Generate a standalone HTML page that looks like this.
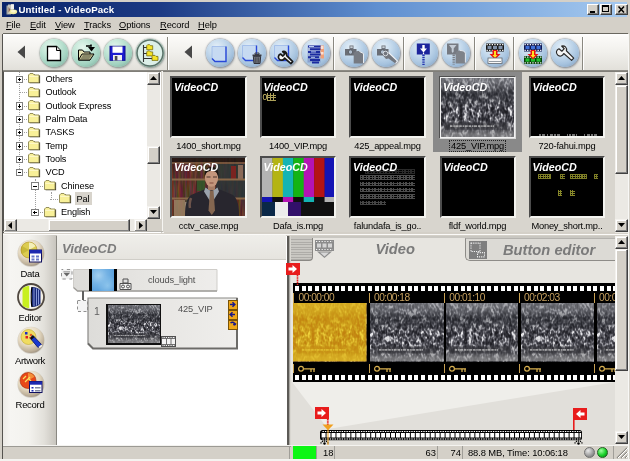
<!DOCTYPE html>
<html>
<head>
<meta charset="utf-8">
<title>Untitled - VideoPack</title>
<style>
*{box-sizing:border-box;margin:0;padding:0}
html,body{width:630px;height:461px;overflow:hidden;background:#d4d0c8}
body{font-family:"Liberation Sans",sans-serif;font-size:9.6px;color:#000;position:relative}
.a{position:absolute}
.t{position:absolute;white-space:nowrap;line-height:1}
#win{position:absolute;left:0;top:0;width:630px;height:461px;background:#d4d0c8;overflow:hidden;filter:blur(.35px)}
/* title */
#title{left:2px;top:2px;width:625px;height:14.500px;background:linear-gradient(90deg,#0a246a 0%,#1c3a84 25%,#5f8fd0 60%,#a6caf0 100%)}
.wb{position:absolute;top:4px;height:11px;width:12px;background:#d4d0c8;border:1px solid;border-color:#fff #404040 #404040 #fff;box-shadow:inset -1px -1px 0 #808080}
/* menu */
.m{position:absolute;top:19px;font-size:9.3px;letter-spacing:-.1px;line-height:12px;white-space:nowrap}
.m u{text-decoration:underline}
/* toolbar */
#tb{left:3px;top:33px;width:625px;height:38px;border-top:1px solid #6a6860;border-bottom:1px solid #8c8a84;background:linear-gradient(180deg,#ffffff 0,#fbfaf8 3px,#f1f0ec 50%,#e2e0da 100%)}
.sep{position:absolute;top:37px;height:33px;width:2px;border-left:1px solid #8a8880;border-right:1px solid #fff}
.btn{position:absolute;width:28px;height:28px;border-radius:50%;top:38px}
.g{background:radial-gradient(circle at 38% 30%,#e6f7ee 0,#c2e6d6 35%,#a2d2c0 65%,#84b2a2 88%,#70968a 100%);box-shadow:0 0 1.500px .5px rgba(110,130,122,.75),1px 1.500px 2px rgba(120,130,125,.5)}
.b{background:radial-gradient(circle at 38% 30%,#e6f0f8 0,#c4d9ec 35%,#a5c2de 65%,#87a3c2 88%,#6e88a8 100%);box-shadow:0 0 1.500px .5px rgba(100,112,130,.75),1px 1.500px 2px rgba(120,125,135,.5)}
/* sunken */
.sunk{border:1px solid;border-color:#808080 #fff #fff #808080}
/* scrollbars */
.sbtn{position:absolute;background:#d4d0c8;border:1px solid;border-color:#f4f2ee #404040 #404040 #f4f2ee;box-shadow:inset -1px -1px 0 #808080,inset 1px 1px 0 #fff}
.track{position:absolute;background:#ebe9e4}
/* tree */
.tr{position:absolute;font-size:9.2px;letter-spacing:-.12px;line-height:12px;white-space:nowrap}
.fold{position:absolute;width:13px;height:11px}
.pm{position:absolute;width:7.500px;height:7.500px;border:1px solid #808080;background:#fff;margin-left:.7px;margin-top:.3px}
.pm:before{content:"";position:absolute;left:1px;top:2.250px;width:3.500px;height:1px;background:#000}
.pm.p:after{content:"";position:absolute;left:2.250px;top:1px;width:1px;height:3.500px;background:#000}
/* thumbs */
.th{position:absolute;width:76.500px;height:62px;background:#000;border:2px solid;border-color:#4c4c4c #f4f4f0 #f4f4f0 #4c4c4c;overflow:hidden}
.vcd{position:absolute;left:2px;top:3px;font:italic bold 10.7px "Liberation Sans",sans-serif;color:#fff;line-height:12px}
.lab{position:absolute;width:90px;text-align:center;font-size:9.3px;line-height:12px;white-space:nowrap;letter-spacing:-.2px}
</style>
</head>
<body>
<svg width="0" height="0" style="position:absolute">
<defs>
<filter id="crowdN" x="0" y="0" width="100%" height="100%" color-interpolation-filters="sRGB">
<feTurbulence type="fractalNoise" baseFrequency="0.22 0.14" numOctaves="2" seed="7" result="a"/>
<feTurbulence type="fractalNoise" baseFrequency="0.55 0.34" numOctaves="1" seed="12" result="b"/>
<feComposite in="a" in2="b" operator="arithmetic" k1="0" k2=".55" k3=".45" k4="0" result="n"/>
<feColorMatrix in="n" type="matrix" values="0 3.2 0 0 -1.1  0 3.2 0 0 -1.1  0 3.2 0 0 -1.1  0 0 0 0 1"/>
<feComponentTransfer><feFuncR type="table" tableValues="0.11 0.18 0.27 0.40 0.66 0.95"/><feFuncG type="table" tableValues="0.11 0.18 0.27 0.40 0.66 0.95"/><feFuncB type="table" tableValues="0.13 0.21 0.30 0.43 0.69 0.96"/></feComponentTransfer>
</filter>
<filter id="crowdN2" x="0" y="0" width="100%" height="100%" color-interpolation-filters="sRGB">
<feTurbulence type="fractalNoise" baseFrequency="0.23 0.15" numOctaves="2" seed="31" result="a"/>
<feTurbulence type="fractalNoise" baseFrequency="0.58 0.36" numOctaves="1" seed="36" result="b"/>
<feComposite in="a" in2="b" operator="arithmetic" k1="0" k2=".55" k3=".45" k4="0" result="n"/>
<feColorMatrix in="n" type="matrix" values="0 3.2 0 0 -1.1  0 3.2 0 0 -1.1  0 3.2 0 0 -1.1  0 0 0 0 1"/>
<feComponentTransfer><feFuncR type="table" tableValues="0.11 0.18 0.27 0.40 0.66 0.95"/><feFuncG type="table" tableValues="0.11 0.18 0.27 0.40 0.66 0.95"/><feFuncB type="table" tableValues="0.13 0.21 0.30 0.43 0.69 0.96"/></feComponentTransfer>
</filter>
<filter id="books" x="0" y="0" width="100%" height="100%" color-interpolation-filters="sRGB">
<feTurbulence type="fractalNoise" baseFrequency="0.45 0.04" numOctaves="2" seed="3"/>
<feColorMatrix type="matrix" values="1.6 0 0 0 -0.25  0 1.1 0 0 -0.25  0 0 0.9 0 -0.2  0 0 0 0 1"/>
</filter>
<linearGradient id="crowdG" x1="0" y1="0" x2="0" y2="1">
<stop offset="0" stop-color="#84868c" stop-opacity=".68"/><stop offset=".14" stop-color="#74767c" stop-opacity=".55"/><stop offset=".25" stop-color="#303238" stop-opacity=".55"/><stop offset=".4" stop-color="#34363c" stop-opacity=".36"/><stop offset=".52" stop-color="#404046" stop-opacity=".05"/><stop offset=".7" stop-color="#3a3a40" stop-opacity=".15"/><stop offset=".84" stop-color="#606064" stop-opacity=".45"/><stop offset=".93" stop-color="#8c8c8e" stop-opacity=".7"/><stop offset="1" stop-color="#909092" stop-opacity=".75"/>
</linearGradient>
<symbol id="crowd" viewBox="0 0 74 58" preserveAspectRatio="none">
<rect width="74" height="58" fill="#606068"/>
<rect width="74" height="58" filter="url(#crowdN)"/>
<rect width="74" height="58" fill="url(#crowdG)"/>
<rect x="4" y="43" width="62" height="7" fill="#303034" opacity=".55"/>
<path d="M9 46.500h44" stroke="#c8c8c8" stroke-width="1.600" stroke-dasharray="2.500 .8 1.500 .6 3 .9" opacity=".7"/>
</symbol>
<symbol id="crowd2" viewBox="0 0 74 58" preserveAspectRatio="none">
<rect width="74" height="58" fill="#606068"/>
<rect width="74" height="58" filter="url(#crowdN2)"/>
<rect width="74" height="58" fill="url(#crowdG)"/>
<rect x="4" y="43" width="62" height="7" fill="#303034" opacity=".55"/>
<path d="M9 46.500h44" stroke="#c8c8c8" stroke-width="1.600" stroke-dasharray="2.500 .8 1.500 .6 3 .9" opacity=".7"/>
</symbol>
</defs></svg>
<div id="win">
<!-- outer frame -->
<div class="a" style="left:2px;top:34px;width:1.200px;height:425px;background:#55534f"></div>
<div class="a" style="left:0;top:459px;width:630px;height:2px;background:#f4f3f0"></div>
<div class="a" style="left:628px;top:34px;width:1px;height:425px;background:#f8f8f6"></div>

<!-- TITLE BAR -->
<div id="title" class="a"></div>
<svg class="a" style="left:5px;top:3px" width="14" height="14" viewBox="0 0 14 14"><path d="M1.500 2.500h4.500v9h-4.500z" fill="#a8a8a0"/><path d="M3 1.500h5.500v9.500h-5.500z" fill="#c4c4bc"/><path d="M6 1.200h3v5h-3z" fill="#f0f0ec"/><path d="M3.500 4l2.500 3.500l-2.500 2z" fill="#8c6458"/><ellipse cx="8.300" cy="8.800" rx="3.900" ry="2.400" fill="#f0eca0"/><ellipse cx="8.300" cy="8.300" rx="2.400" ry="1.200" fill="#fbf8d0"/></svg>
<div class="t" id="ttxt" style="left:18.400px;top:4.600px;font-weight:bold;font-size:9.700px;color:#fff;letter-spacing:.12px">Untitled - VideoPack</div>
<div class="wb" style="left:587px"><div class="a" style="left:2px;top:6px;width:5px;height:2px;background:#000"></div></div>
<div class="wb" style="left:600px"><div class="a" style="left:1px;top:0px;width:7px;height:7px;border:1px solid #000;border-top-width:2px"></div></div>
<div class="wb" style="left:615px;width:13px"><svg class="a" style="left:1px;top:0" width="9" height="9" viewBox="0 0 9 9"><path d="M1.5 1.5L7 7.5M7 1.5L1.5 7.5" stroke="#000" stroke-width="1.5"/></svg></div>

<!-- MENU -->
<div class="m" style="left:6px"><u>F</u>ile</div>
<div class="m" style="left:30px"><u>E</u>dit</div>
<div class="m" style="left:55px"><u>V</u>iew</div>
<div class="m" style="left:84px"><u>T</u>racks</div>
<div class="m" style="left:119px"><u>O</u>ptions</div>
<div class="m" style="left:160px"><u>R</u>ecord</div>
<div class="m" style="left:198px"><u>H</u>elp</div>

<!-- TOOLBAR -->
<div id="tb" class="a"></div>
<div class="sep" style="left:167px"></div>
<div class="sep" style="left:333px"></div>
<div class="sep" style="left:403px"></div>
<div class="sep" style="left:474px"></div>
<div class="sep" style="left:513px"></div>
<div class="sep" style="left:582px"></div>
<svg class="a" style="left:17px;top:45px" width="9" height="14"><path d="M8 0.5L0.5 7L8 13.5Z" fill="#484848"/></svg>
<svg class="a" style="left:184px;top:45px" width="9" height="14"><path d="M8 0.5L0.5 7L8 13.5Z" fill="#484848"/></svg>
<div id="tbicons">
<div class="btn g" style="left:40px;top:39px"><svg width="28" height="28" viewBox="0 0 28 28" style="position:absolute;left:0;top:0"><path d="M7.5 7.5h9l4 4v10h-13z" fill="#fff" stroke="#000" stroke-width="1.3"/><path d="M16.5 7.5v4h4" fill="#ddd" stroke="#000" stroke-width="1"/></svg></div>
<div class="btn g" style="left:72px;top:39px"><svg width="28" height="28" viewBox="0 0 28 28" style="position:absolute;left:0;top:0"><path d="M14 7h5v-1.5" fill="none" stroke="#000" stroke-width="1.6"/><path d="M16 8l3.5 4.5l3.5-4.5z" fill="#000"/><path d="M6.5 11h4l1.5 2h6v8h-11.5z" fill="#e8e4b4" stroke="#000" stroke-width="1"/><path d="M6.5 21l3.5-6h12l-4 6z" fill="#d8d4a0" stroke="#000" stroke-width="1"/><path d="M8 20.5l3-4.5h9l-3 4.5z" fill="#6a6850" opacity=".7"/></svg></div>
<div class="btn g" style="left:104px;top:39px"><svg width="28" height="28" viewBox="0 0 28 28" style="position:absolute;left:0;top:0"><rect x="6" y="7.300" width="15" height="14" fill="#1c1cd0" stroke="#0c0c8c" stroke-width="1"/><rect x="8.500" y="7.500" width="10" height="6.300" fill="#fff"/><rect x="9" y="16" width="9" height="5.500" fill="#f0f0f0"/><rect x="10.800" y="17" width="2.600" height="4.500" fill="#484850"/></svg></div>
<div class="btn g" style="left:136px;top:39px"><svg width="28" height="28" viewBox="0 0 28 28" style="position:absolute;left:0;top:0"><circle cx="14" cy="14" r="13" fill="#dcefe8" stroke="#5a7068" stroke-width="1.500"/><path d="M7.500 6v17M7.500 8.500h4M7.500 14.500h4M7.500 19.500h9" stroke="#303030" stroke-width="1.100" fill="none"/><path d="M10.7 6.7l1-1h2l1 1h2v4h-6z" fill="#f4e428" stroke="#6c6000" stroke-width=".7"/><path d="M10.7 12.9l1-1h2l1 1h2v4h-6z" fill="#f4e428" stroke="#6c6000" stroke-width=".7"/><path d="M16 17.4l1-1h2l1 1h2v4h-6z" fill="#f4e428" stroke="#6c6000" stroke-width=".7"/></svg></div>
<div class="btn b" style="margin-top:.5px;left:206px;top:38px"><svg width="28" height="28" viewBox="0 0 28 28" style="position:absolute;left:0;top:0"><path d="M6 7.5h14v15h-11l-3-3z" fill="#c6daf2"/><path d="M6 7.5h14v15h-11l-3-3z" fill="none" stroke="#9ab8e8" stroke-width=".8"/><path d="M20 7.5v15h-11l-3-3" fill="none" stroke="#2848d8" stroke-width="1.400"/></svg></div>
<div class="btn b" style="margin-top:.5px;left:238px;top:38px"><svg width="28" height="28" viewBox="0 0 28 28" style="position:absolute;left:0;top:0"><path d="M4.5 6.5h14v15h-11l-3-3z" fill="#c6daf2"/><path d="M4.5 6.5h14v15h-11l-3-3z" fill="none" stroke="#9ab8e8" stroke-width=".8"/><path d="M18.5 6.5v15h-11l-3-3" fill="none" stroke="#2848d8" stroke-width="1.400"/><path d="M14.500 15.500h9v1.600h-9z" fill="#3c3c44"/><path d="M17 14h4v1.500h-4z" fill="none" stroke="#3c3c44" stroke-width="1"/><path d="M15.300 17.300h7.400l-.7 7.200h-6z" fill="#787c84" stroke="#303038" stroke-width="1"/><path d="M17.300 18.300v5.500M19 18.300v5.500M20.700 18.300v5.500" stroke="#303038" stroke-width=".7"/></svg></div>
<div class="btn b" style="margin-top:.5px;left:270px;top:38px"><svg width="28" height="28" viewBox="0 0 28 28" style="position:absolute;left:0;top:0"><path d="M4.5 6.5h14v15h-11l-3-3z" fill="#c6daf2"/><path d="M4.5 6.5h14v15h-11l-3-3z" fill="none" stroke="#9ab8e8" stroke-width=".8"/><path d="M18.5 6.5v15h-11l-3-3" fill="none" stroke="#2848d8" stroke-width="1.400"/><path d="M10.5 15a3.200 3.200 0 1 0 4.100 4.100l6.300 5.500l1.800-2l-6-6a3.200 3.200 0 0 0-4-4l2.200 2.300l-2 2.100z" fill="#f6f6f6" stroke="#181818" stroke-width="1.700" stroke-linejoin="round"/></svg></div>
<div class="btn b" style="margin-top:.5px;left:301.5px;top:38px"><svg width="28" height="28" viewBox="0 0 28 28" style="position:absolute;left:0;top:0"><rect x="5.500" y="6.500" width="13" height="17" fill="#1c2890" opacity=".25"/><path d="M6 7.500h13M8 10.200h11M6 12.900h12M8 15.600h11M6 18.300h11M8 21h10M10 23.500h7" stroke="#1a2aa0" stroke-width="2"/><path d="M7 7.500h5M9 12.900h5M9 18.300h4" stroke="#b8ccf4" stroke-width="1"/><rect x="18.500" y="6.500" width="3.500" height="13" fill="#f0a078"/><rect x="19" y="7" width="2.500" height="3" fill="#fbe0d4"/><rect x="19" y="13" width="2.500" height="2.500" fill="#fbe0d4"/></svg></div>
<div class="btn b" style="margin-top:.5px;left:339.5px;top:38px"><svg width="28" height="28" viewBox="0 0 28 28" style="position:absolute;left:0;top:0"><path d="M5 10h4.500v-3.500h4v3.500h3v6.500h-11.500z" fill="#6a6e76"/><circle cx="10.500" cy="13" r="2.200" fill="#aebccc" stroke="#50545c" stroke-width=".8"/><rect x="10.300" y="7.300" width="2.400" height="1.800" fill="#c8d0d8"/><path d="M13.700 14c1-1.500 4-2.500 6-1.500l4 2v10h-10z" fill="#767a82"/><path d="M19.500 12.500l4 2v9.500" fill="none" stroke="#e8ecf0" stroke-width="1"/></svg></div>
<div class="btn b" style="margin-top:.5px;left:371.5px;top:38px"><svg width="28" height="28" viewBox="0 0 28 28" style="position:absolute;left:0;top:0"><path d="M5 10h4.500v-3.500h4v3.500h3v6.500h-11.500z" fill="#6a6e76"/><circle cx="10.500" cy="13" r="2.200" fill="#aebccc" stroke="#50545c" stroke-width=".8"/><rect x="10.300" y="7.300" width="2.400" height="1.800" fill="#c8d0d8"/><path d="M12 12.500c2-1 4 0 5 1.500l8.500 8l-2 2.500l-7-5l-2.500.5l-3-3.500z" fill="#72767e"/><path d="M16.500 13.500l9 8.500l-2 2.500" fill="none" stroke="#eef0f4" stroke-width="1.100"/><circle cx="13.500" cy="14.500" r="2.300" fill="none" stroke="#dfe4ea" stroke-width=".9"/></svg></div>
<div class="btn b" style="margin-top:.5px;left:409.5px;top:38px"><svg width="28" height="28" viewBox="0 0 28 28" style="position:absolute;left:0;top:0"><rect x="6.800" y="4.500" width="13" height="11" fill="#1c249c"/><path d="M12.300 6h2.400v3.500h2.300l-3.500 4l-3.500-4h2.300z" fill="#fff"/><path d="M13.500 13.500v2" stroke="#fff" stroke-width="1.200"/><path d="M13.500 15.500v10.500" stroke="#2434b0" stroke-width="2.400" stroke-dasharray="1.400 .9"/></svg></div>
<div class="btn b" style="margin-top:.5px;left:441.5px;top:38px"><svg width="28" height="28" viewBox="0 0 28 28" style="position:absolute;left:0;top:0"><rect x="5" y="4.500" width="11.500" height="11" fill="#767a82"/><path d="M7 6h7.500l-2.800 3.500v3l-1 1.500l-1-1.500v-3z" fill="#c4ccd6"/><path d="M11.700 15.500v10" stroke="#7a7e86" stroke-width="2.400" stroke-dasharray="1.400 .9"/><path d="M13.600 14.500c0-2 2-3 4.500-3s5.300 1 5.300 3v10h-9.800z" fill="#7e8289"/><path d="M18 11.500c3 0 5.400 1 5.400 3v9" fill="none" stroke="#e4e8ee" stroke-width="1"/></svg></div>
<div class="btn b" style="margin-top:.5px;left:480.5px;top:38px"><svg width="28" height="28" viewBox="0 0 28 28" style="position:absolute;left:0;top:0"><rect x="5" y="4.5" width="18" height="8" fill="#181818"/><path d="M5.500 5.7h17M5.500 11.3h17" stroke="#fff" stroke-width="1.200" stroke-dasharray="1.300 1.300"/><rect x="6.500" y="6.9" width="4" height="3.200" fill="#8090a8"/><rect x="12" y="6.9" width="4" height="3.200" fill="#8090a8"/><rect x="17.500" y="6.9" width="4" height="3.200" fill="#8090a8"/><path d="M11.500 11h5v4h3l-5.500 5.500l-5.500-5.500h3z" fill="#e81010"/><path d="M13 12h2v4h1.500l-2.500 3l-2.500-3h1.500z" fill="#ffe020"/><rect x="7" y="19" width="14" height="5.500" fill="#f8f8f8" stroke="#606870" stroke-width=".8"/><path d="M8 22.500h12" stroke="#9098a0" stroke-width="1"/></svg></div>
<div class="btn b" style="margin-top:.5px;left:519px;top:38px"><svg width="28" height="28" viewBox="0 0 28 28" style="position:absolute;left:0;top:0"><rect x="5" y="4.5" width="18" height="8" fill="#101850"/><path d="M5.500 5.7h17M5.500 11.3h17" stroke="#fff" stroke-width="1.200" stroke-dasharray="1.300 1.300"/><rect x="6.500" y="6.9" width="4" height="3.200" fill="#4070d8"/><rect x="12" y="6.9" width="4" height="3.200" fill="#4070d8"/><rect x="17.500" y="6.9" width="4" height="3.200" fill="#4070d8"/><rect x="5" y="17" width="18" height="8" fill="#084008"/><path d="M5.500 18.2h17M5.500 23.8h17" stroke="#fff" stroke-width="1.200" stroke-dasharray="1.300 1.300"/><rect x="6.500" y="19.4" width="4" height="3.200" fill="#20c030"/><rect x="12" y="19.4" width="4" height="3.200" fill="#20c030"/><rect x="17.500" y="19.4" width="4" height="3.200" fill="#20c030"/><path d="M11.500 11h5v4h3l-5.500 5.500l-5.500-5.500h3z" fill="#e81010"/><path d="M13 12h2v4h1.500l-2.500 3l-2.500-3h1.500z" fill="#ffe020"/></svg></div>
<div class="btn b" style="margin-top:.5px;left:551px;top:38px"><svg width="28" height="28" viewBox="0 0 28 28" style="position:absolute;left:0;top:0"><g transform="translate(-1,.8) scale(1.05)"><path d="M8.5 8.5a3.6 3.6 0 1 0 4.600 4.600l7.500 6.500l2-2.200l-7-7a3.600 3.600 0 0 0-4.500-4.500l2.500 2.600l-2.300 2.400z" fill="#f4f4f4" stroke="#282828" stroke-width="1.1" stroke-linejoin="round"/></g></svg></div>
</div>

<!-- TREE PANEL -->
<div id="tree">
<div class="a" style="left:3px;top:71px;width:158px;height:162px;background:#fff;border-top:1px solid #807e78;border-left:1px solid #55534e"></div>
<div class="a" style="left:19px;top:72px;width:0;height:101px;border-left:1px dotted #a0a0a0"></div>
<div class="a" style="left:35px;top:179px;width:0;height:34px;border-left:1px dotted #a0a0a0"></div>
<div class="a" style="left:51px;top:192px;width:0;height:8px;border-left:1px dotted #a0a0a0"></div>
<div class="a" style="left:19px;top:78.9px;width:8px;height:0;border-top:1px dotted #a0a0a0"></div>
<div class="pm p" style="left:15px;top:75.4px"></div>
<svg class="fold" style="left:28px;top:73.4px" viewBox="0 0 13 11"><path d="M1.600 2.600l1.500-1.500h3l1.500 1.500h4.500v7.700h-10.500z" fill="#3c3a28"/><path d="M.5 2l1.500-1.500h3l1.500 1.500h4.500v7.500h-10.500z" fill="#f8f098" stroke="#8c8650" stroke-width=".9"/><path d="M1.300 3.300h9" stroke="#fffce0" stroke-width=".8"/></svg>
<div class="tr" style="left:45.5px;top:72.9px">Others</div>
<div class="a" style="left:19px;top:92.2px;width:8px;height:0;border-top:1px dotted #a0a0a0"></div>
<svg class="fold" style="left:28px;top:86.7px" viewBox="0 0 13 11"><path d="M1.600 2.600l1.500-1.500h3l1.500 1.500h4.500v7.700h-10.500z" fill="#3c3a28"/><path d="M.5 2l1.500-1.500h3l1.500 1.500h4.500v7.500h-10.500z" fill="#f8f098" stroke="#8c8650" stroke-width=".9"/><path d="M1.300 3.300h9" stroke="#fffce0" stroke-width=".8"/></svg>
<div class="tr" style="left:45.5px;top:86.2px">Outlook</div>
<div class="a" style="left:19px;top:105.6px;width:8px;height:0;border-top:1px dotted #a0a0a0"></div>
<div class="pm p" style="left:15px;top:102.1px"></div>
<svg class="fold" style="left:28px;top:100.1px" viewBox="0 0 13 11"><path d="M1.600 2.600l1.500-1.500h3l1.500 1.500h4.500v7.700h-10.500z" fill="#3c3a28"/><path d="M.5 2l1.500-1.500h3l1.500 1.500h4.500v7.500h-10.500z" fill="#f8f098" stroke="#8c8650" stroke-width=".9"/><path d="M1.300 3.300h9" stroke="#fffce0" stroke-width=".8"/></svg>
<div class="tr" style="left:45.5px;top:99.6px">Outlook Express</div>
<div class="a" style="left:19px;top:118.9px;width:8px;height:0;border-top:1px dotted #a0a0a0"></div>
<div class="pm p" style="left:15px;top:115.4px"></div>
<svg class="fold" style="left:28px;top:113.4px" viewBox="0 0 13 11"><path d="M1.600 2.600l1.500-1.500h3l1.500 1.500h4.500v7.700h-10.500z" fill="#3c3a28"/><path d="M.5 2l1.500-1.500h3l1.500 1.500h4.500v7.500h-10.500z" fill="#f8f098" stroke="#8c8650" stroke-width=".9"/><path d="M1.300 3.300h9" stroke="#fffce0" stroke-width=".8"/></svg>
<div class="tr" style="left:45.5px;top:112.9px">Palm Data</div>
<div class="a" style="left:19px;top:132.2px;width:8px;height:0;border-top:1px dotted #a0a0a0"></div>
<div class="pm p" style="left:15px;top:128.7px"></div>
<svg class="fold" style="left:28px;top:126.7px" viewBox="0 0 13 11"><path d="M1.600 2.600l1.500-1.500h3l1.500 1.500h4.500v7.700h-10.500z" fill="#3c3a28"/><path d="M.5 2l1.500-1.500h3l1.500 1.500h4.500v7.500h-10.500z" fill="#f8f098" stroke="#8c8650" stroke-width=".9"/><path d="M1.300 3.300h9" stroke="#fffce0" stroke-width=".8"/></svg>
<div class="tr" style="left:45.5px;top:126.2px">TASKS</div>
<div class="a" style="left:19px;top:145.6px;width:8px;height:0;border-top:1px dotted #a0a0a0"></div>
<div class="pm p" style="left:15px;top:142.1px"></div>
<svg class="fold" style="left:28px;top:140.1px" viewBox="0 0 13 11"><path d="M1.600 2.600l1.500-1.500h3l1.500 1.500h4.500v7.700h-10.500z" fill="#3c3a28"/><path d="M.5 2l1.500-1.500h3l1.500 1.500h4.500v7.500h-10.500z" fill="#f8f098" stroke="#8c8650" stroke-width=".9"/><path d="M1.300 3.300h9" stroke="#fffce0" stroke-width=".8"/></svg>
<div class="tr" style="left:45.5px;top:139.6px">Temp</div>
<div class="a" style="left:19px;top:158.9px;width:8px;height:0;border-top:1px dotted #a0a0a0"></div>
<div class="pm p" style="left:15px;top:155.4px"></div>
<svg class="fold" style="left:28px;top:153.4px" viewBox="0 0 13 11"><path d="M1.600 2.600l1.500-1.500h3l1.500 1.500h4.500v7.700h-10.500z" fill="#3c3a28"/><path d="M.5 2l1.500-1.500h3l1.500 1.500h4.500v7.500h-10.500z" fill="#f8f098" stroke="#8c8650" stroke-width=".9"/><path d="M1.300 3.300h9" stroke="#fffce0" stroke-width=".8"/></svg>
<div class="tr" style="left:45.5px;top:152.9px">Tools</div>
<div class="a" style="left:19px;top:172.2px;width:8px;height:0;border-top:1px dotted #a0a0a0"></div>
<div class="pm " style="left:15px;top:168.7px"></div>
<svg class="fold" style="left:28px;top:166.7px" viewBox="0 0 13 11"><path d="M1.600 2.600l1.500-1.500h3l1.500 1.500h4.500v7.700h-10.500z" fill="#3c3a28"/><path d="M.5 2l1.500-1.500h3l1.500 1.500h4.500v7.500h-10.500z" fill="#f8f098" stroke="#8c8650" stroke-width=".9"/><path d="M1.300 3.300h9" stroke="#fffce0" stroke-width=".8"/></svg>
<div class="tr" style="left:45.5px;top:166.2px">VCD</div>
<div class="a" style="left:34.5px;top:185.5px;width:8px;height:0;border-top:1px dotted #a0a0a0"></div>
<div class="pm " style="left:30.5px;top:182.0px"></div>
<svg class="fold" style="left:43.5px;top:180.0px" viewBox="0 0 13 11"><path d="M1.600 2.600l1.500-1.500h3l1.500 1.500h4.500v7.700h-10.500z" fill="#3c3a28"/><path d="M.5 2l1.500-1.500h3l1.500 1.500h4.500v7.500h-10.500z" fill="#f8f098" stroke="#8c8650" stroke-width=".9"/><path d="M1.300 3.300h9" stroke="#fffce0" stroke-width=".8"/></svg>
<div class="tr" style="left:61.0px;top:179.5px">Chinese</div>
<div class="a" style="left:50px;top:198.9px;width:8px;height:0;border-top:1px dotted #a0a0a0"></div>
<svg class="fold" style="left:59px;top:193.4px" viewBox="0 0 13 11"><path d="M1.600 2.600l1.500-1.500h3l1.500 1.500h4.500v7.700h-10.500z" fill="#3c3a28"/><path d="M.5 2l1.500-1.500h3l1.500 1.500h4.500v7.500h-10.500z" fill="#f8f098" stroke="#8c8650" stroke-width=".9"/><path d="M1.300 3.300h9" stroke="#fffce0" stroke-width=".8"/></svg>
<div class="a" style="left:74.5px;top:192.4px;width:17px;height:13px;background:#d8d4cc"></div>
<div class="tr" style="left:76.5px;top:192.9px">Pal</div>
<div class="a" style="left:34.5px;top:212.2px;width:8px;height:0;border-top:1px dotted #a0a0a0"></div>
<div class="pm p" style="left:30.5px;top:208.7px"></div>
<svg class="fold" style="left:43.5px;top:206.7px" viewBox="0 0 13 11"><path d="M1.600 2.600l1.500-1.500h3l1.500 1.500h4.500v7.700h-10.500z" fill="#3c3a28"/><path d="M.5 2l1.500-1.500h3l1.500 1.500h4.500v7.500h-10.500z" fill="#f8f098" stroke="#8c8650" stroke-width=".9"/><path d="M1.300 3.300h9" stroke="#fffce0" stroke-width=".8"/></svg>
<div class="tr" style="left:61.0px;top:206.2px">English</div>
<div class="track" style="left:147px;top:72px;width:13px;height:147px"></div>
<div class="sbtn" style="left:147px;top:72px;width:13px;height:13px"><svg class="a" style="left:2px;top:3px" width="7" height="4"><path d="M0 4L3.500 0L7 4z" fill="#000"/></svg></div>
<div class="sbtn" style="left:147px;top:206px;width:13px;height:13px"><svg class="a" style="left:2px;top:3px" width="7" height="4"><path d="M0 0L3.500 4L7 0z" fill="#000"/></svg></div>
<div class="sbtn" style="left:147px;top:146px;width:13px;height:18px"></div>
<div class="track" style="left:4px;top:219px;width:143px;height:13px"></div>
<div class="sbtn" style="left:4px;top:219px;width:13px;height:13px"><svg class="a" style="left:3px;top:2px" width="4" height="7"><path d="M4 0L0 3.500L4 7z" fill="#000"/></svg></div>
<div class="sbtn" style="left:134px;top:219px;width:13px;height:13px"><svg class="a" style="left:4px;top:2px" width="4" height="7"><path d="M0 0L4 3.500L0 7z" fill="#000"/></svg></div>
<div class="sbtn" style="left:48px;top:219px;width:82px;height:13px"></div>
<div class="a" style="left:147px;top:219px;width:14px;height:13px;background:#d4d0c8"></div>
<div class="a" style="left:162px;top:71px;width:1.500px;height:162px;background:#f6f5f2"></div>
<div class="a" style="left:3px;top:231.300px;width:625px;height:1.200px;background:#b6b4ae"></div>
</div>
<!-- THUMBS PANEL -->
<div id="thumbs">
<div class="a" style="left:163px;top:71px;width:465px;height:161px;background:#d8d5ce;border-top:1px solid #807e78"></div>
<div class="th" style="left:170px;top:76px"><div class="vcd">VideoCD</div></div>
<div class="lab" style="left:163.5px;top:140px">1400_short.mpg</div>
<div class="th" style="left:259.5px;top:76px"><div class="t" style="left:1px;top:15px;font-size:8.5px;color:#d8c870;letter-spacing:-.5px">0<span style="display:inline-block;width:9px;height:8px;vertical-align:-1px;background:repeating-linear-gradient(90deg,#d8c870 0 1.500px,transparent 1.500px 3px),repeating-linear-gradient(0deg,#d8c870 0 1px,transparent 1px 2.700px);opacity:.8"></span></div><div class="vcd">VideoCD</div></div>
<div class="lab" style="left:253px;top:140px">1400_VIP.mpg</div>
<div class="th" style="left:349px;top:76px"><div class="vcd">VideoCD</div></div>
<div class="lab" style="left:342.5px;top:140px">425_appeal.mpg</div>
<div class="a" style="left:433px;top:72px;width:89px;height:80px;background:#898989"></div>
<div class="th" style="left:439px;top:76px;height:63px;border-color:#505050 #d8d8d8 #d8d8d8 #505050;border-width:1px;box-shadow:inset 0 0 0 1px #f2f2f2"><div class="a" style="left:0;top:0;width:75px;height:61px;border:1px solid #f2f2f2;z-index:3"></div><svg class="a" style="left:1px;top:1px" width="74" height="60"><use href="#crowd" width="74" height="60"/></svg><div class="vcd" style="left:3px;top:4px">VideoCD</div></div>
<div class="lab" style="left:432.5px;top:140px"><span style="display:inline-block;outline:1px dotted #222;outline-offset:-1px;padding:0 2px">425_VIP.mpg</span></div>
<div class="th" style="left:528.5px;top:76px"><div class="a" style="left:8px;top:55.500px;width:60px;height:2.500px;background:repeating-linear-gradient(90deg,#e8e8e8 0 1.500px,transparent 1.500px 3px,#e8e8e8 3px 6px,transparent 6px 7.500px);opacity:.5"></div><div class="a" style="left:30px;top:55px;width:6px;height:3px;background:#000"></div><div class="a" style="left:46px;top:55px;width:5px;height:3px;background:#000"></div><div class="vcd">VideoCD</div></div>
<div class="lab" style="left:522px;top:140px">720-fahui.mpg</div>
<div class="th" style="left:170px;top:156px"><svg class="a" style="left:0;top:0" width="73" height="58" viewBox="0 0 73 58">
<rect width="73" height="58" fill="#4a2a22"/><rect width="73" height="58" filter="url(#books)" opacity=".28"/>
<rect x="44" y="6" width="29" height="34" fill="#24363a" opacity=".75"/><rect x="59" y="8" width="5" height="13" fill="#7a2420"/><rect x="66" y="7" width="5" height="14" fill="#8a6a58"/>
<rect x="25" y="22" width="8" height="11" fill="#2c5a2a" opacity=".8"/><rect x="2" y="42" width="11" height="16" fill="#a08868" opacity=".8"/><rect x="13" y="44" width="6" height="14" fill="#c0b0a0" opacity=".6"/>
<path d="M0 21.500h73M0 40.500h30M52 40.500h21" stroke="#8a6848" stroke-width="2.200"/><path d="M0 5h73" stroke="#7a5a40" stroke-width="2" opacity=".8"/>
<rect x="0" y="0" width="73" height="4" fill="#1c1410" opacity=".8"/>
<path d="M13 58c0-9 1-17 6-21l12-5l5-2h8l5 2l12 5c5 4 6 12 6 21z" fill="#28262e"/>
<path d="M33.500 29.500l6 4l6-4l1.500 4l-7.500 12l-7.500-12z" fill="#9aa2ac"/><path d="M38 32.500h3.500l1.500 20l-3.200 4.500l-3.300-4.500z" fill="#846650"/>
<rect x="36" y="24" width="7" height="8" fill="#a87c64"/><ellipse cx="39.500" cy="20" rx="6.600" ry="8.800" fill="#c4967c"/><path d="M32.700 19c-.7-8 3-10 7-10s7.500 2.500 6.500 10c-1-4.500-2.500-6-6.500-6s-6 1.500-7 6z" fill="#1c1612"/>
<path d="M34.500 19h4M41 19h4" stroke="#4a342a" stroke-width="1.200"/><path d="M37.500 25h4" stroke="#8a5444" stroke-width="1.100"/>
<path d="M19 40c-1 3-2 6-1 10" stroke="#8a6858" stroke-width="2.500" fill="none" opacity=".7"/>
</svg><div class="vcd">VideoCD</div></div>
<div class="lab" style="left:163.5px;top:220px">cctv_case.mpg</div>
<div class="th" style="left:259.5px;top:156px"><svg class="a" style="left:0;top:0" width="73" height="58" viewBox="0 0 73 58"><rect x="0.00" y="0" width="10.73" height="39" fill="#b4b4b4"/><rect x="10.43" y="0" width="10.73" height="39" fill="#b4b414"/><rect x="20.86" y="0" width="10.73" height="39" fill="#14b4b4"/><rect x="31.29" y="0" width="10.73" height="39" fill="#14b414"/><rect x="41.71" y="0" width="10.73" height="39" fill="#b414b4"/><rect x="52.14" y="0" width="10.73" height="39" fill="#b41414"/><rect x="62.57" y="0" width="10.73" height="39" fill="#1414b4"/><rect x="0.00" y="39" width="10.73" height="5" fill="#1414b4"/><rect x="10.43" y="39" width="10.73" height="5" fill="#101010"/><rect x="20.86" y="39" width="10.73" height="5" fill="#b414b4"/><rect x="31.29" y="39" width="10.73" height="5" fill="#101010"/><rect x="41.71" y="39" width="10.73" height="5" fill="#14b4b4"/><rect x="52.14" y="39" width="10.73" height="5" fill="#101010"/><rect x="62.57" y="39" width="10.73" height="5" fill="#b4b4b4"/><rect x="0" y="44" width="73" height="14" fill="#101010"/><rect x="0" y="44" width="13" height="14" fill="#0a2848"/><rect x="13" y="44" width="13" height="14" fill="#ececec"/><rect x="26" y="44" width="13" height="14" fill="#32106a"/></svg><div class="vcd">VideoCD</div></div>
<div class="lab" style="left:253px;top:220px">Dafa_is.mpg</div>
<div class="th" style="left:349px;top:156px"><div class="a" style="left:14px;top:11.0px;width:50px;height:4.6px;opacity:0.3;background:repeating-linear-gradient(90deg,#8c8c8c 0 1.100px,transparent 1.100px 2.100px,#8c8c8c 2.100px 3.900px,transparent 3.900px 6.100px),repeating-linear-gradient(0deg,#8c8c8c 0 1px,transparent 1px 2.100px)"></div><div class="a" style="left:9px;top:17.3px;width:55px;height:4.6px;opacity:0.5;background:repeating-linear-gradient(90deg,#9a9a9a 0 1.100px,transparent 1.100px 2.100px,#9a9a9a 2.100px 3.900px,transparent 3.900px 6.100px),repeating-linear-gradient(0deg,#9a9a9a 0 1px,transparent 1px 2.100px)"></div><div class="a" style="left:9px;top:23.6px;width:55px;height:4.6px;opacity:0.5;background:repeating-linear-gradient(90deg,#9a9a9a 0 1.100px,transparent 1.100px 2.100px,#9a9a9a 2.100px 3.900px,transparent 3.900px 6.100px),repeating-linear-gradient(0deg,#9a9a9a 0 1px,transparent 1px 2.100px)"></div><div class="a" style="left:9px;top:29.9px;width:55px;height:4.6px;opacity:0.5;background:repeating-linear-gradient(90deg,#9a9a9a 0 1.100px,transparent 1.100px 2.100px,#9a9a9a 2.100px 3.900px,transparent 3.900px 6.100px),repeating-linear-gradient(0deg,#9a9a9a 0 1px,transparent 1px 2.100px)"></div><div class="a" style="left:9px;top:36.2px;width:55px;height:4.6px;opacity:0.5;background:repeating-linear-gradient(90deg,#9a9a9a 0 1.100px,transparent 1.100px 2.100px,#9a9a9a 2.100px 3.900px,transparent 3.900px 6.100px),repeating-linear-gradient(0deg,#9a9a9a 0 1px,transparent 1px 2.100px)"></div><div class="a" style="left:9px;top:42.5px;width:26px;height:4.6px;opacity:0.45;background:repeating-linear-gradient(90deg,#9a9a9a 0 1.100px,transparent 1.100px 2.100px,#9a9a9a 2.100px 3.900px,transparent 3.900px 6.100px),repeating-linear-gradient(0deg,#9a9a9a 0 1px,transparent 1px 2.100px)"></div><div class="vcd">VideoCD</div></div>
<div class="lab" style="left:342.5px;top:220px">falundafa_is_go..</div>
<div class="th" style="left:439.5px;top:156px"><div class="vcd">VideoCD</div></div>
<div class="lab" style="left:432.5px;top:220px">fldf_world.mpg</div>
<div class="th" style="left:528.5px;top:156px"><div class="a" style="left:7px;top:15.8px;width:13.5px;height:5px;opacity:0.6;background:repeating-linear-gradient(90deg,#d0d040 0 1.200px,transparent 1.200px 2px,#d0d040 2px 3.500px,transparent 3.500px 4.600px),repeating-linear-gradient(0deg,#d0d040 0 1.100px,transparent 1.100px 2px)"></div><div class="a" style="left:29.5px;top:15.8px;width:4.5px;height:5px;opacity:0.6;background:repeating-linear-gradient(90deg,#d0d040 0 1.200px,transparent 1.200px 2px,#d0d040 2px 3.500px,transparent 3.500px 4.600px),repeating-linear-gradient(0deg,#d0d040 0 1.100px,transparent 1.100px 2px)"></div><div class="a" style="left:39.5px;top:15.8px;width:17px;height:5px;opacity:0.6;background:repeating-linear-gradient(90deg,#d0d040 0 1.200px,transparent 1.200px 2px,#d0d040 2px 3.500px,transparent 3.500px 4.600px),repeating-linear-gradient(0deg,#d0d040 0 1.100px,transparent 1.100px 2px)"></div><div class="a" style="left:63px;top:15.8px;width:4.5px;height:5px;opacity:0.6;background:repeating-linear-gradient(90deg,#d0d040 0 1.200px,transparent 1.200px 2px,#d0d040 2px 3.500px,transparent 3.500px 4.600px),repeating-linear-gradient(0deg,#d0d040 0 1.100px,transparent 1.100px 2px)"></div><div class="a" style="left:27px;top:32px;width:4.6px;height:5.5px;opacity:0.65;background:repeating-linear-gradient(90deg,#d0d040 0 1.200px,transparent 1.200px 2px,#d0d040 2px 3.500px,transparent 3.500px 4.600px),repeating-linear-gradient(0deg,#d0d040 0 1.100px,transparent 1.100px 2px)"></div><div class="a" style="left:39.5px;top:32px;width:5px;height:5.5px;opacity:0.65;background:repeating-linear-gradient(90deg,#d0d040 0 1.200px,transparent 1.200px 2px,#d0d040 2px 3.500px,transparent 3.500px 4.600px),repeating-linear-gradient(0deg,#d0d040 0 1.100px,transparent 1.100px 2px)"></div><div class="vcd">VideoCD</div></div>
<div class="lab" style="left:522px;top:220px">Money_short.mp..</div>
<div class="track" style="left:615px;top:72px;width:13px;height:161px"></div>
<div class="sbtn" style="left:615px;top:72px;width:13px;height:13px"><svg class="a" style="left:2px;top:3px" width="7" height="4"><path d="M0 4L3.500 0L7 4z" fill="#000"/></svg></div>
<div class="sbtn" style="left:615px;top:219px;width:13px;height:13px"><svg class="a" style="left:2px;top:3px" width="7" height="4"><path d="M0 0L3.500 4L7 0z" fill="#000"/></svg></div>
<div class="sbtn" style="left:615px;top:85px;width:13px;height:89px"></div>
</div>
<!-- BOTTOM -->
<div id="bottom">
<div class="a" style="left:3px;top:233.700px;width:625px;height:1.500px;background:#fbfaf8"></div>
<div class="a" style="left:3px;top:235px;width:54px;height:210px;background:linear-gradient(90deg,#eceae6 0,#f6f5f2 14%,#f3f2ee 48%,#e2e0da 76%,#c6c3bc 100%);"></div>
<div class="a" style="left:56px;top:236px;width:1px;height:209px;background:#8a8882"></div>
<div class="a" style="left:57px;top:236px;width:229px;height:209px;background:#fff"></div>
<div class="a" style="left:57px;top:235px;width:229px;height:25px;background:linear-gradient(180deg,#efeeea,#e6e4df);border-bottom:1px solid #d0cec8"></div>
<div class="t" style="left:62px;top:241.500px;font:italic bold 13.2px 'Liberation Sans',sans-serif;color:#7c7c7c;line-height:14px">VideoCD</div>
<div class="a" style="left:286px;top:236px;width:5px;height:209px;background:linear-gradient(90deg,#fff 0 1px,#5c5a56 1px 3px,#a8a6a0 3px 4px,#d8d6d0 4px 5px)"></div>
<div class="a" id="rp" style="left:291px;top:236px;width:324px;height:209px;background:#e7e5e0;overflow:hidden"></div>
<svg class="a" style="left:15.500px;top:238px" width="30" height="30" viewBox="0 0 30 30"><defs><radialGradient id="bg252" cx=".4" cy=".3" r=".75"><stop offset="0" stop-color="#fbf6ea"/><stop offset=".55" stop-color="#e4d8c0"/><stop offset=".85" stop-color="#bcae98"/><stop offset="1" stop-color="#988c7c"/></radialGradient></defs><circle cx="15" cy="15.400" r="13.600" fill="#a09888" opacity=".35"/><circle cx="15" cy="15" r="13.100" fill="url(#bg252)"/><circle cx="13" cy="12" r="8" fill="#dccc50"/><path d="M13 4a8 8 0 0 1 7 4l-7 4z" fill="#f4efb8"/><path d="M13 12l-7 4a8 8 0 0 1 0-8z" fill="#c8b838" /><circle cx="13" cy="12" r="8" fill="none" stroke="#b09020" stroke-width=".6"/><rect x="13.500" y="12" width="12" height="12" fill="#fff" stroke="#101060" stroke-width="1"/><rect x="13.500" y="12" width="12" height="3.500" fill="#1c28b0"/><path d="M15.500 17.500h3v2h-3zM20 17.500h3v2h-3zM15.500 20.500h3v2h-3zM20 20.500h3v2h-3z" fill="#6878c8"/></svg>
<svg class="a" style="left:15.500px;top:281.5px" width="30" height="30" viewBox="0 0 30 30"><defs><radialGradient id="bg297" cx=".4" cy=".3" r=".75"><stop offset="0" stop-color="#fbf6ea"/><stop offset=".55" stop-color="#e4d8c0"/><stop offset=".85" stop-color="#bcae98"/><stop offset="1" stop-color="#988c7c"/></radialGradient></defs><circle cx="15" cy="15.400" r="13.600" fill="#a09888" opacity=".35"/><circle cx="15" cy="15" r="13.100" fill="url(#bg297)"/><circle cx="15" cy="15" r="13" fill="#f4f0e4" stroke="#504840" stroke-width="1.800"/><path d="M6.500 6.500c2-2 5-2.500 7-2.500v22c-2 0-5-.5-7-2.500z" fill="#c8f020"/><path d="M13.500 4h2.500v22h-2.500z" fill="#fff"/><path d="M16 5c4 0 7 1.500 8.500 3.500v13c-1.500 2-4.500 3.500-8.500 3.500z" fill="#182878"/><path d="M18 6v18M20.500 6.500v17M22.500 7.500v15" stroke="#8898d8" stroke-width="1"/><path d="M16 5c-1 3-1 17 0 20" stroke="#000" stroke-width="1.200" fill="none"/></svg>
<svg class="a" style="left:15.500px;top:325px" width="30" height="30" viewBox="0 0 30 30"><defs><radialGradient id="bg342" cx=".4" cy=".3" r=".75"><stop offset="0" stop-color="#fbf6ea"/><stop offset=".55" stop-color="#e4d8c0"/><stop offset=".85" stop-color="#bcae98"/><stop offset="1" stop-color="#988c7c"/></radialGradient></defs><circle cx="15" cy="15.400" r="13.600" fill="#a09888" opacity=".35"/><circle cx="15" cy="15" r="13.100" fill="url(#bg342)"/><circle cx="12.500" cy="12" r="7.500" fill="#f0dc60"/><circle cx="12.500" cy="12" r="7.500" fill="none" stroke="#c0a830" stroke-width=".6"/><rect x="9" y="7" width="2.500" height="2.500" fill="#2030c0"/><rect x="9.500" y="11" width="2.500" height="2.500" fill="#e02020"/><circle cx="15" cy="10" r="1.300" fill="#e06020"/><path d="M14 13l3-2.500l8.500 9l-3.500 3z" fill="#1838d0" stroke="#081060" stroke-width=".8"/><path d="M14 13l3-2.500l1.500 1.500l-3 2.800z" fill="#101010"/><path d="M22.500 22l3-2.500l.8 1.500l-2.500 2z" fill="#f0f0f0"/><path d="M13 12l2 .5l-1 1.500z" fill="#e02020"/></svg>
<svg class="a" style="left:15.500px;top:368.6px" width="30" height="30" viewBox="0 0 30 30"><defs><radialGradient id="bg387" cx=".4" cy=".3" r=".75"><stop offset="0" stop-color="#fbf6ea"/><stop offset=".55" stop-color="#e4d8c0"/><stop offset=".85" stop-color="#bcae98"/><stop offset="1" stop-color="#988c7c"/></radialGradient></defs><circle cx="15" cy="15.400" r="13.600" fill="#a09888" opacity=".35"/><circle cx="15" cy="15" r="13.100" fill="url(#bg387)"/><circle cx="12" cy="11.500" r="8" fill="#e84818"/><path d="M12 3.500a8 8 0 0 1 7 4l-7 4z" fill="#f8a040" opacity=".8"/><path d="M7 10l3-3M9 13l5-5M12 9l3 3" stroke="#f8e060" stroke-width="1.200"/><circle cx="12" cy="11.500" r="8" fill="none" stroke="#a02808" stroke-width=".6"/><rect x="13.500" y="12.500" width="12.500" height="11" fill="#fff" stroke="#101060" stroke-width="1"/><rect x="13.500" y="12.500" width="12.500" height="3.200" fill="#1c28b0"/><path d="M15.500 18h2v1.500h-2zM15.500 21h2v1.500h-2z" fill="#1c28b0"/><path d="M19 18.800h5.500M19 21.800h5.500" stroke="#8088a0" stroke-width="1.400"/></svg>
<div class="t" style="left:3px;width:54px;text-align:center;top:268.4px;font-size:9.5px;line-height:12px;letter-spacing:-.3px">Data</div>
<div class="t" style="left:3px;width:54px;text-align:center;top:311.8px;font-size:9.5px;line-height:12px;letter-spacing:-.3px">Editor</div>
<div class="t" style="left:3px;width:54px;text-align:center;top:355.2px;font-size:9.5px;line-height:12px;letter-spacing:-.3px">Artwork</div>
<div class="t" style="left:3px;width:54px;text-align:center;top:398.7px;font-size:9.5px;line-height:12px;letter-spacing:-.3px">Record</div>
<svg class="a" style="left:61px;top:269.400px" width="11.500" height="10.500" viewBox="0 0 12 11"><rect x=".5" y=".5" width="11" height="10" fill="#f2f2f2" stroke="#8a8a8a" stroke-width="1" stroke-dasharray="3.500 3.800" stroke-dashoffset="1.700"/><path d="M2.500 3.800h7l-3.500 4z" fill="#686868"/><path d="M2.500 2.800h7" stroke="#a0a0a0" stroke-width="1"/></svg>
<svg class="a" style="left:73px;top:269px" width="148" height="23" viewBox="0 0 148 23"><defs><linearGradient id="cg1" x1="0" y1="0" x2="1" y2="0"><stop offset="0" stop-color="#dcdbd8"/><stop offset=".6" stop-color="#e8e7e4"/><stop offset="1" stop-color="#eeedeb"/></linearGradient></defs><path d="M.5 .5h143.500v21.500h-139.500l-4-3.500z" fill="url(#cg1)" stroke="#cfcdc9" stroke-width="1"/><path d="M.5 18.500l4 3.500h139.500" fill="none" stroke="#a09e9a" stroke-width="1.300"/></svg>
<div class="a" style="left:89.300px;top:269.400px;width:27.500px;height:21.200px;background:#000"></div>
<div class="a" style="left:92.200px;top:269.400px;width:22.300px;height:21.200px;background:radial-gradient(ellipse at 70% 75%,#8cc4ec 0,rgba(140,196,236,0) 45%),radial-gradient(ellipse at 30% 30%,#a4d0f0 0,#74b2e4 40%,#5aa0dc 75%,#4c94d4 100%)"></div>
<svg class="a" style="left:118.700px;top:278.300px" width="13" height="12" viewBox="0 0 13 12"><path d="M1 5.500h11v6h-11z" fill="#f4f4f4" stroke="#505050" stroke-width="1"/><path d="M4 1h5v4h-5z" fill="#e0e0e0" stroke="#505050" stroke-width="1"/><circle cx="4" cy="8.500" r="1.500" fill="none" stroke="#404040" stroke-width=".9"/><circle cx="9" cy="8.500" r="1.500" fill="none" stroke="#404040" stroke-width=".9"/></svg>
<div class="t" style="left:148px;top:276.300px;font-size:9.3px;color:#505050;letter-spacing:-.15px">clouds_light</div>
<div class="a" style="left:82px;top:291px;width:2px;height:9px;background:#606060"></div>
<svg class="a" style="left:77px;top:300px" width="11" height="12" viewBox="0 0 11 12"><rect x=".5" y=".5" width="10" height="11" fill="#f4f4f4" stroke="#909090" stroke-width="1" stroke-dasharray="3 2.500"/></svg>
<svg class="a" style="left:87px;top:297px" width="152" height="53" viewBox="0 0 152 53"><defs><linearGradient id="cg2" x1="0" y1="0" x2="1" y2="0"><stop offset="0" stop-color="#dddcd9"/><stop offset=".5" stop-color="#e8e7e4"/><stop offset="1" stop-color="#efeeec"/></linearGradient></defs><path d="M1 1h149v50.500h-144l-5-5z" fill="url(#cg2)" stroke="#8a8986" stroke-width="1.200"/><path d="M1 46.500l5 5h144v-50.500" fill="none" stroke="#6c6b68" stroke-width="2"/></svg>
<div class="t" style="left:94px;top:306px;font-size:10.500px;color:#606060">1</div>
<div class="a" style="left:106px;top:304px;width:55px;height:41px;background:#101010"></div>
<svg class="a" style="left:108px;top:305px" width="52" height="38"><use href="#crowd2" width="52" height="38"/></svg>
<div class="t" style="left:178px;top:304.500px;font-size:9.300px;color:#505050;letter-spacing:-.15px">425_VIP</div>
<svg class="a" style="left:161px;top:336px" width="15" height="11" viewBox="0 0 15 11"><rect x=".5" y=".5" width="14" height="10" fill="#f4f4f4" stroke="#505050" stroke-width="1"/><path d="M1 2.500h13M1 8.500h13" stroke="#505050" stroke-width=".8"/><path d="M1.500 1.500h12M1.500 9.500h12" stroke="#505050" stroke-width="1" stroke-dasharray="1 1.300"/><path d="M5.500 2.500v6M10 2.500v6" stroke="#505050" stroke-width=".8"/></svg>
<svg class="a" style="left:227.800px;top:300px" width="10" height="10" viewBox="0 0 10 10"><rect x=".5" y=".5" width="9" height="9" fill="#f0a818" stroke="#7a5408" stroke-width="1"/><path d="M2 4.500h4.500M4.500 2.300l2.300 2.200l-2.300 2.200" fill="none" stroke="#18188c" stroke-width="1.500"/></svg>
<svg class="a" style="left:227.800px;top:310px" width="10" height="10" viewBox="0 0 10 10"><rect x=".5" y=".5" width="9" height="9" fill="#f0a818" stroke="#7a5408" stroke-width="1"/><path d="M7 4.500h-4.500M4.500 2.300l-2.300 2.200l2.300 2.200" fill="none" stroke="#18188c" stroke-width="1.500"/></svg>
<svg class="a" style="left:227.800px;top:320px" width="10" height="10" viewBox="0 0 10 10"><rect x=".5" y=".5" width="9" height="9" fill="#f0a818" stroke="#7a5408" stroke-width="1"/><path d="M2.500 3c2-1.500 4.500-.5 4.500 2M7 5l-1.800-.8M7 5l.8-1.800" fill="none" stroke="#18188c" stroke-width="1.500"/></svg>
<div class="a" style="left:291px;top:236px;width:324px;height:2px;background:#c9c7c1"></div>
<svg class="a" style="left:291px;top:382px" width="324" height="63" viewBox="0 0 324 63"><rect width="324" height="63" fill="#e1dfda"/><path d="M1 0h323l-287 47z" fill="#efeeea"/></svg>
<div class="a" style="left:291px;top:238px;width:22px;height:23px;border-radius:0 0 4px 0;background:repeating-linear-gradient(180deg,#c9c7c2 0 1.300px,#aeaca8 1.300px 2.500px);border-right:1px solid #8a8884;border-bottom:1px solid #8a8884"></div>
<svg class="a" style="left:315px;top:240px" width="19" height="18" viewBox="0 0 19 18"><rect x="0" y="0" width="19" height="11" fill="#8c8c8c"/><path d="M1 1.500h17M1 9.500h17" stroke="#f4f4f4" stroke-width="1.200" stroke-dasharray="1.200 1.600"/><rect x="2" y="3.500" width="4" height="4" fill="#d4d4d4"/><rect x="7.500" y="3.500" width="4" height="4" fill="#d4d4d4"/><rect x="13" y="3.500" width="4" height="4" fill="#d4d4d4"/><path d="M2 11.500h15l-7.500 6.500z" fill="#8c8c8c"/><path d="M5 12.500h9l-4.500 4z" fill="#d8d8d8"/></svg>
<div class="t" style="left:375.500px;top:241px;font:italic bold 14.700px 'Liberation Sans',sans-serif;color:#7a7a7a;line-height:16px">Video</div>
<div class="a" style="left:465px;top:238px;width:151px;height:23px;background:#dcdad5;border-left:1px solid #8e8c88;border-bottom:1px solid #8e8c88;border-top:1px solid #b4b2ae;border-radius:0 0 0 5px"></div>
<svg class="a" style="left:469px;top:241px" width="18" height="18" viewBox="0 0 18 17" preserveAspectRatio="none"><rect width="18" height="17" fill="#7e7e7e"/><rect x="2" y="2" width="9" height="8" fill="none" stroke="#f0f0f0" stroke-width="1" stroke-dasharray="1.200 1"/><rect x="8.500" y="11" width="7" height="4" fill="none" stroke="#f0f0f0" stroke-width="1" stroke-dasharray="1.200 1"/></svg>
<div class="t" style="left:503px;top:242px;font:italic bold 14.700px 'Liberation Sans',sans-serif;color:#7a7a7a;line-height:16px">Button editor</div>
<div class="a" style="left:292.500px;top:282.500px;width:322.500px;height:99.700px;background:#000"></div>
<div class="a" style="left:294.500px;top:285.500px;width:320.500px;height:5.400px;background:repeating-linear-gradient(90deg,#fff 0 4px,transparent 4px 6.630px)"></div>
<div class="a" style="left:294.500px;top:375px;width:320.500px;height:5.400px;background:repeating-linear-gradient(90deg,#fff 0 4px,transparent 4px 6.630px)"></div>
<div class="a" style="left:293px;top:293px;width:1.300px;height:9.500px;background:#c8a050"></div>
<div class="a" style="left:293px;top:364px;width:1.300px;height:9px;background:#c8a050"></div>
<div class="t" style="left:298.5px;top:293.300px;font-size:10.200px;color:#c8a260;letter-spacing:-.5px;">00:00:00</div>
<svg class="a" style="left:293px;top:303.300px" width="73.5" height="58.500"><use href="#crowd" width="73.5" height="58.500"/><rect width="100%" height="100%" fill="#d6a21a" opacity=".56"/><rect width="100%" height="100%" fill="#ffc000" style="mix-blend-mode:overlay" opacity=".5"/></svg>
<svg class="a" style="left:298px;top:365px;overflow:hidden" width="18" height="8" viewBox="0 0 18 8"><circle cx="3" cy="3.800" r="2.400" fill="none" stroke="#d8b050" stroke-width="1.200"/><path d="M5.500 3.800h11.500M13 4v3M16 4v3" stroke="#d8b050" stroke-width="1.300" fill="none"/></svg>
<div class="a" style="left:368.5px;top:293px;width:1.300px;height:9.500px;background:#c8a050"></div>
<div class="a" style="left:368.5px;top:364px;width:1.300px;height:9px;background:#c8a050"></div>
<div class="t" style="left:374.0px;top:293.300px;font-size:10.200px;color:#c8a260;letter-spacing:-.5px;">00:00:18</div>
<svg class="a" style="left:370px;top:303.300px" width="73.9" height="58.500"><use href="#crowd2" width="73.9" height="58.500"/></svg>
<svg class="a" style="left:373.5px;top:365px;overflow:hidden" width="18" height="8" viewBox="0 0 18 8"><circle cx="3" cy="3.800" r="2.400" fill="none" stroke="#d8b050" stroke-width="1.200"/><path d="M5.500 3.800h11.500M13 4v3M16 4v3" stroke="#d8b050" stroke-width="1.300" fill="none"/></svg>
<div class="a" style="left:443.8px;top:293px;width:1.300px;height:9.500px;background:#c8a050"></div>
<div class="a" style="left:443.8px;top:364px;width:1.300px;height:9px;background:#c8a050"></div>
<div class="t" style="left:449.3px;top:293.300px;font-size:10.200px;color:#c8a260;letter-spacing:-.5px;">00:01:10</div>
<svg class="a" style="left:445.5px;top:303.300px" width="72.5" height="58.500"><use href="#crowd" width="72.5" height="58.500"/></svg>
<svg class="a" style="left:448.8px;top:365px;overflow:hidden" width="18" height="8" viewBox="0 0 18 8"><circle cx="3" cy="3.800" r="2.400" fill="none" stroke="#d8b050" stroke-width="1.200"/><path d="M5.500 3.800h11.500M13 4v3M16 4v3" stroke="#d8b050" stroke-width="1.300" fill="none"/></svg>
<div class="a" style="left:518.5px;top:293px;width:1.300px;height:9.500px;background:#c8a050"></div>
<div class="a" style="left:518.5px;top:364px;width:1.300px;height:9px;background:#c8a050"></div>
<div class="t" style="left:524.0px;top:293.300px;font-size:10.200px;color:#c8a260;letter-spacing:-.5px;">00:02:03</div>
<svg class="a" style="left:520.5px;top:303.300px" width="73.5" height="58.500"><use href="#crowd2" width="73.5" height="58.500"/></svg>
<svg class="a" style="left:523.5px;top:365px;overflow:hidden" width="18" height="8" viewBox="0 0 18 8"><circle cx="3" cy="3.800" r="2.400" fill="none" stroke="#d8b050" stroke-width="1.200"/><path d="M5.500 3.800h11.500M13 4v3M16 4v3" stroke="#d8b050" stroke-width="1.300" fill="none"/></svg>
<div class="a" style="left:593.5px;top:293px;width:1.300px;height:9.500px;background:#c8a050"></div>
<div class="a" style="left:593.5px;top:364px;width:1.300px;height:9px;background:#c8a050"></div>
<div class="t" style="left:599.0px;top:293.300px;font-size:10.200px;color:#c8a260;letter-spacing:-.5px;width:16px;overflow:hidden">00:0</div>
<div class="a" style="left:596.5px;top:303.300px;width:18.500px;height:58.500px;overflow:hidden"><svg width="73" height="58.500"><use href="#crowd2" width="73" height="58.500"/></svg></div>
<svg class="a" style="left:598.5px;top:365px;overflow:hidden" width="16" height="8" viewBox="0 0 16 8"><circle cx="3" cy="3.800" r="2.400" fill="none" stroke="#d8b050" stroke-width="1.200"/><path d="M5.500 3.800h11.500M13 4v3M16 4v3" stroke="#d8b050" stroke-width="1.300" fill="none"/></svg>
<svg class="a" style="left:285.5px;top:262.7px" width="14" height="23" viewBox="0 0 14 23"><rect x="0" y="0" width="14" height="12" fill="#e81c1c"/><path d="M11.500 12v10" stroke="#e81c1c" stroke-width="1.600" stroke-dasharray="1.500 .7"/><path d="M2.500 4.500h4v-2.500l4.500 4l-4.500 4v-2.500h-4z" fill="#fff"/></svg>
<svg class="a" style="left:315.3px;top:407.3px" width="14" height="19" viewBox="0 0 14 19"><rect x="0" y="0" width="14" height="12" fill="#e81c1c"/><path d="M12.800 12v7" stroke="#e81c1c" stroke-width="1.800" stroke-dasharray="1.500 .7"/><path d="M2.500 4.500h4v-2.500l4.500 4l-4.500 4v-2.500h-4z" fill="#fff"/></svg>
<svg class="a" style="left:572.5px;top:407.6px" width="14" height="23" viewBox="0 0 14 23"><rect x="0" y="0" width="14" height="12" fill="#e81c1c"/><path d="M.8 12v11" stroke="#e81c1c" stroke-width="1.600"/><path d="M11.500 4.500h-4v-2.500l-4.500 4l4.500 4v-2.500h4z" fill="#fff"/></svg>
<svg class="a" style="left:319px;top:429px" width="265" height="17" viewBox="0 0 265 17"><rect x="1" y="1" width="262" height="10.200" rx="2.500" fill="#000"/><path d="M3.500 2.500h258M3.500 10h258" stroke="#fff" stroke-width="1.100" stroke-dasharray="1.400 1"/><path d="M2.600 6.300h259.500" stroke="#fff" stroke-width="4.400" stroke-dasharray="3.950 1.010"/><path d="M2 14.500a3.500 2.500 0 0 1 7 0" fill="none" stroke="#000" stroke-width="1.300" stroke-dasharray="1.200 .8"/><circle cx="5.500" cy="14.500" r="1.200" fill="#000"/><path d="M256 14.500a3.500 2.500 0 0 1 7 0" fill="none" stroke="#000" stroke-width="1.300" stroke-dasharray="1.200 .8"/><circle cx="259.500" cy="14.500" r="1.200" fill="#000"/></svg>
<svg class="a" style="left:322px;top:424px" width="12" height="22" viewBox="0 0 12 22"><path d="M.5 .5h11l-5.500 5.800z" fill="#f0a020"/><path d="M6 5v17" stroke="#f0a020" stroke-width="1"/></svg>
<div class="track" style="left:615px;top:236px;width:13px;height:209px"></div>
<div class="sbtn" style="left:615px;top:236px;width:13px;height:13px"><svg class="a" style="left:2px;top:3px" width="7" height="4"><path d="M0 4L3.500 0L7 4z" fill="#000"/></svg></div>
<div class="sbtn" style="left:615px;top:249px;width:13px;height:122px"></div>
<div class="sbtn" style="left:615px;top:431px;width:13px;height:13px"><svg class="a" style="left:2px;top:3px" width="7" height="4"><path d="M0 0L3.500 4L7 0z" fill="#000"/></svg></div>
</div>
<!-- STATUS -->
<div id="status">
<div class="a" style="left:3px;top:444.500px;width:625px;height:1px;background:#f4f3f0"></div><div class="a" style="left:3px;top:445.500px;width:288px;height:1px;background:#9c9a94"></div>
<div class="a" style="left:293px;top:446px;width:23px;height:13px;background:#0cf614"></div>
<div class="a" style="left:4px;top:446px;width:286px;height:13px;border-right:1px solid #a09e98"></div>
<div class="a" style="left:292px;top:446px;width:25px;height:13px;border-right:1px solid #a09e98"></div>
<div class="a" style="left:318px;top:446px;width:17px;height:13px;border-right:1px solid #a09e98"></div>
<div class="a" style="left:336px;top:446px;width:102px;height:13px;border-right:1px solid #a09e98"></div>
<div class="a" style="left:439px;top:446px;width:24px;height:13px;border-right:1px solid #a09e98"></div>
<div class="a" style="left:464px;top:446px;width:150px;height:13px;border-right:1px solid #a09e98"></div>
<div class="t" style="left:323px;top:448px;font-size:9.4px">18</div>
<div class="t" style="left:400px;width:36px;text-align:right;top:448px;font-size:9.4px">63</div>
<div class="t" style="left:440px;width:21px;text-align:right;top:448px;font-size:9.4px">74</div>
<div class="t" style="left:468px;top:448px;font-size:9.4px;letter-spacing:-.1px">88.8 MB, Time: 10:06:18</div>
<div class="a" style="left:584px;top:447px;width:11px;height:11px;border-radius:50%;background:radial-gradient(circle at 35% 30%,#e8e8e8,#a0a0a0 55%,#686868);border:1px solid #707070"></div>
<div class="a" style="left:597px;top:447px;width:11px;height:11px;border-radius:50%;background:radial-gradient(circle at 35% 30%,#a0ffa0,#18d028 55%,#087818);border:1px solid #206020"></div>
<svg class="a" style="left:615px;top:446px" width="13" height="13"><path d="M12 2L2 12M12 6L6 12M12 10L10 12" stroke="#8a8882" stroke-width="1.2"/><path d="M13 2L3 12M13 6L7 12M13 10L11 12" stroke="#fff" stroke-width="1"/></svg>
</div>
</div>
</body>
</html>
